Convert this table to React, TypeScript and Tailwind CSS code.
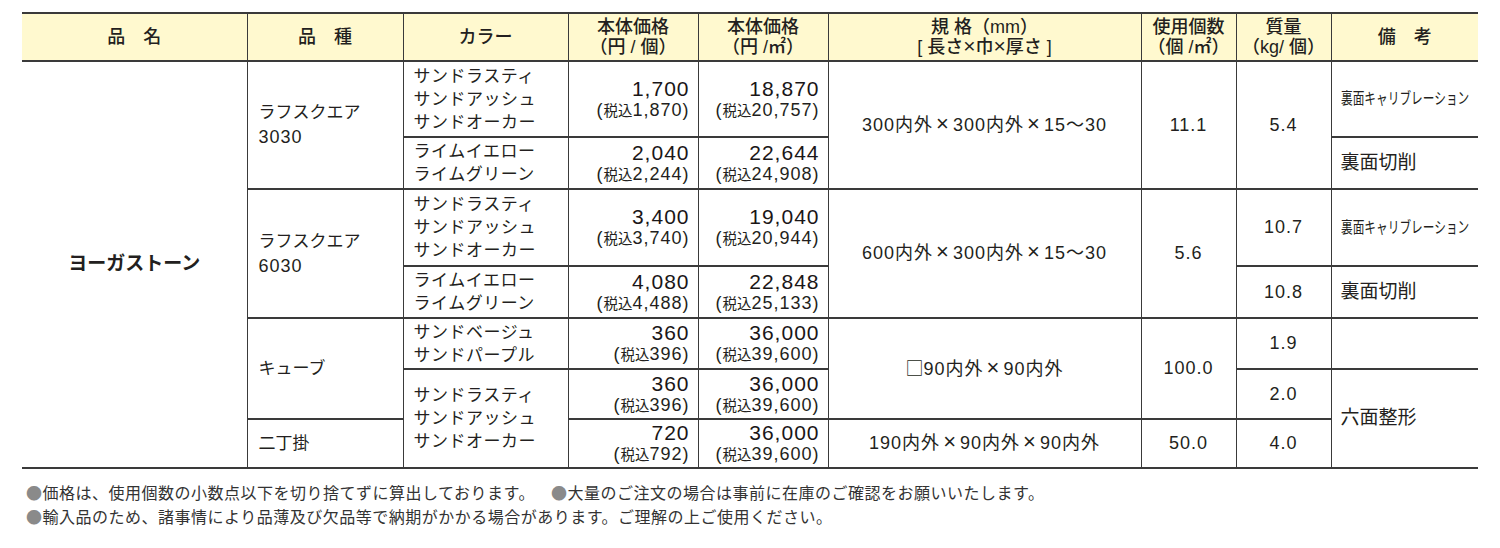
import React from "react";

const b = "border-x border-y-2 border-[#3a3a3a] p-0 align-middle";
const hd = "border-x border-y-2 border-[#3a3a3a] p-0 align-middle bg-[#fff9cf] text-center text-[18px] leading-[20px] font-medium";

function Price({ main, tax }: { main: string; tax: string }) {
  return (
    <td className={`${b} text-right pr-[8px]`}>
      <div className="text-[21px] leading-[22px] tracking-[1px] text-[#1a1617]">{main}</div>
      <div className="text-[18px] leading-[20px] tracking-[1px]">
        (<span className="text-[14.5px] tracking-normal">税込</span>
        {tax})
      </div>
    </td>
  );
}

function Colors({ names, rowSpan }: { names: string[]; rowSpan?: number }) {
  return (
    <td rowSpan={rowSpan} className={`${b} pl-[10px] text-[17px] leading-[23px] tracking-[0.5px]`}>
      {names.map((n) => (
        <div key={n}>{n}</div>
      ))}
    </td>
  );
}

function Num({ v, rowSpan }: { v: string; rowSpan?: number }) {
  return (
    <td rowSpan={rowSpan} className={`${b} text-center text-[18px] tracking-[1px]`}>
      {v}
    </td>
  );
}

function X() {
  return <span className="mx-[3px] text-[22px] leading-[0]">×</span>;
}

function Calib() {
  return (
    <td className={`${b} border-r-0 pl-[9px] whitespace-nowrap`}>
      <span className="inline-block origin-left scale-x-[0.73] text-[16px]">裏面キャリブレーション</span>
    </td>
  );
}

function Cut({ rowSpan }: { rowSpan?: number }) {
  return (
    <td rowSpan={rowSpan} className={`${b} border-r-0 pl-[9px] text-[19px]`}>
      裏面切削
    </td>
  );
}

function Kind({ name, num, rowSpan }: { name: string; num?: string; rowSpan?: number }) {
  return (
    <td rowSpan={rowSpan} className={`${b} pl-[11px] text-[17px] leading-[24px]`}>
      <div>{name}</div>
      {num && <div className="text-[18px] tracking-[1px]">{num}</div>}
    </td>
  );
}

const sandA = ["サンドラスティ", "サンドアッシュ", "サンドオーカー"];
const lime = ["ライムイエロー", "ライムグリーン"];

export default function App() {
  return (
    <div className="w-[1500px] h-[548px] bg-white pl-[22px] pt-[12px] text-[#231f20] font-['Liberation_Sans','Noto_Sans_CJK_JP',sans-serif]">
      <table className="border-collapse table-fixed w-[1456px]">
        <colgroup>
          <col className="w-[225px]" />
          <col className="w-[156px]" />
          <col className="w-[165px]" />
          <col className="w-[130px]" />
          <col className="w-[130px]" />
          <col className="w-[313px]" />
          <col className="w-[95px]" />
          <col className="w-[95px]" />
          <col className="w-[147px]" />
        </colgroup>
        <thead>
          <tr className="h-[48px]">
            <th className={`${hd} border-l-0`}>品　名</th>
            <th className={hd}>品　種</th>
            <th className={hd}>カラー</th>
            <th className={hd}>
              <div>本体価格</div>
              <div>（円 / 個）</div>
            </th>
            <th className={hd}>
              <div>本体価格</div>
              <div>（円 /㎡）</div>
            </th>
            <th className={hd}>
              <div>規 格（mm）</div>
              <div>
                [ 長さ<span className="text-[21px] leading-[0]">×</span>巾<span className="text-[21px] leading-[0]">×</span>厚さ ]
              </div>
            </th>
            <th className={hd}>
              <div>使用個数</div>
              <div>（個 /㎡）</div>
            </th>
            <th className={hd}>
              <div>質量</div>
              <div>（kg/ 個）</div>
            </th>
            <th className={`${hd} border-r-0`}>備　考</th>
          </tr>
        </thead>
        <tbody>
          <tr className="h-[76px]">
            <td rowSpan={7} className={`${b} border-l-0 text-center text-[19px] font-bold`}>
              ヨーガストーン
            </td>
            <Kind rowSpan={2} name="ラフスクエア" num="3030" />
            <Colors names={sandA} />
            <Price main="1,700" tax="1,870" />
            <Price main="18,870" tax="20,757" />
            <td rowSpan={2} className={`${b} text-center text-[18px] tracking-[1px]`}>
              300内外<X />300内外<X />15〜30
            </td>
            <Num rowSpan={2} v="11.1" />
            <Num rowSpan={2} v="5.4" />
            <Calib />
          </tr>
          <tr className="h-[52px]">
            <Colors names={lime} />
            <Price main="2,040" tax="2,244" />
            <Price main="22,644" tax="24,908" />
            <Cut />
          </tr>
          <tr className="h-[77px]">
            <Kind rowSpan={2} name="ラフスクエア" num="6030" />
            <Colors names={sandA} />
            <Price main="3,400" tax="3,740" />
            <Price main="19,040" tax="20,944" />
            <td rowSpan={2} className={`${b} text-center text-[18px] tracking-[1px]`}>
              600内外<X />300内外<X />15〜30
            </td>
            <Num rowSpan={2} v="5.6" />
            <Num v="10.7" />
            <Calib />
          </tr>
          <tr className="h-[52px]">
            <Colors names={lime} />
            <Price main="4,080" tax="4,488" />
            <Price main="22,848" tax="25,133" />
            <Num v="10.8" />
            <Cut />
          </tr>
          <tr className="h-[51px]">
            <Kind rowSpan={2} name="キューブ" />
            <Colors names={["サンドベージュ", "サンドパープル"]} />
            <Price main="360" tax="396" />
            <Price main="36,000" tax="39,600" />
            <td rowSpan={2} className={`${b} text-center text-[18px] tracking-[1px]`}>
              <span className="font-['Noto_Sans_CJK_JP'] tracking-normal">□</span>90内外<X />90内外
            </td>
            <Num rowSpan={2} v="100.0" />
            <Num v="1.9" />
            <td className={`${b} border-r-0`}></td>
          </tr>
          <tr className="h-[50px]">
            <Colors rowSpan={2} names={sandA} />
            <Price main="360" tax="396" />
            <Price main="36,000" tax="39,600" />
            <Num v="2.0" />
            <td rowSpan={2} className={`${b} border-r-0 pl-[9px] text-[19px]`}>
              六面整形
            </td>
          </tr>
          <tr className="h-[49px]">
            <Kind name="二丁掛" />
            <Price main="720" tax="792" />
            <Price main="36,000" tax="39,600" />
            <td className={`${b} text-center text-[18px] tracking-[1px]`}>
              190内外<X />90内外<X />90内外
            </td>
            <Num v="50.0" />
            <Num v="4.0" />
          </tr>
        </tbody>
      </table>
      <div className="mt-[11px] pl-[4px] text-[16px] leading-[24px] tracking-[0.5px] text-[#333] font-['Noto_Sans_CJK_JP',sans-serif]">
        <p>
          <span className="text-[#8a8a8a]">●</span>価格は、使用個数の小数点以下を切り捨てずに算出しております。
          <span className="ml-[16px]">
            <span className="text-[#8a8a8a]">●</span>大量のご注文の場合は事前に在庫のご確認をお願いいたします。
          </span>
        </p>
        <p>
          <span className="text-[#8a8a8a]">●</span>輸入品のため、諸事情により品薄及び欠品等で納期がかかる場合があります。ご理解の上ご使用ください。
        </p>
      </div>
    </div>
  );
}
